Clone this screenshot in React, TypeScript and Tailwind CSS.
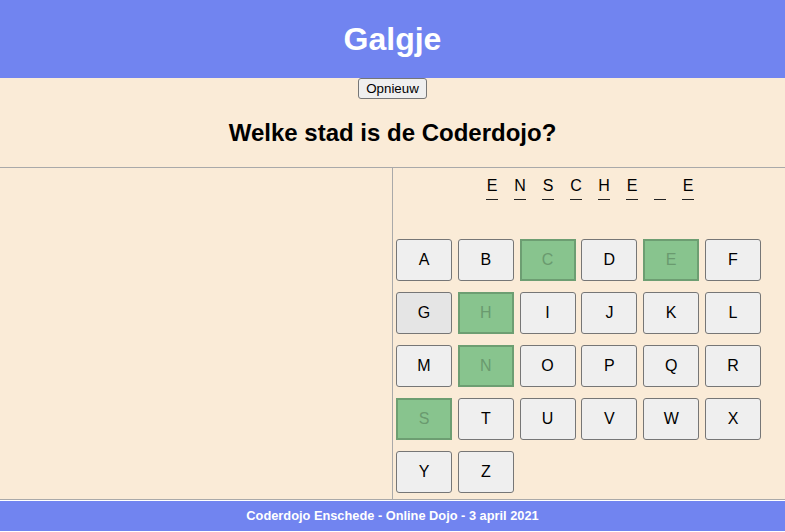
import React from 'react';

const ALPHABET = 'ABCDEFGHIJKLMNOPQRSTUVWXYZ'.split('');
const GUESSED = ['C', 'E', 'H', 'N', 'S'];
const WORD = ['E', 'N', 'S', 'C', 'H', 'E', '', 'E'];

const LetterButton: React.FC<{ letter: string }> = ({ letter }) => {
    const used = GUESSED.includes(letter);
    if (used) {
        return (
            <button
                disabled
                className="h-[42px] w-[56px] border-2 border-[#6d9e72] bg-[#88c48e] text-[16px] text-[#6a9a6f]"
            >
                {letter}
            </button>
        );
    }
    return (
        <button
            className={`h-[42px] w-[56px] rounded-[3px] border border-[#767676] text-[16px] text-black ${letter === 'G' ? 'bg-[#e5e5e5]' : 'bg-[#efefef]'}`}
        >
            {letter}
        </button>
    );
};

export default function App() {
    return (
        <div className="min-h-[532px] bg-white font-['Liberation_Sans',Arial,sans-serif]">
            <div className="bg-[#faebd7]">
                <header className="flex h-[78px] items-center justify-center bg-[#7184f0]">
                    <h1 className="text-[32px] font-bold text-white">Galgje</h1>
                </header>
                <div className="flex justify-center">
                    <button className="h-[21px] rounded-[3px] border border-[#767676] bg-[#efefef] px-[7px] text-[13.33px] leading-none text-black">
                        Opnieuw
                    </button>
                </div>
                <h2 className="my-[20px] text-center text-[24px] font-bold leading-[28px] text-black">
                    Welke stad is de Coderdojo?
                </h2>
                <div className="grid grid-cols-[393px_1fr] border-y border-[#a9a9a9]">
                    <div className="border-r border-[#a9a9a9]"></div>
                    <div className="pb-[6px] pt-[7px]">
                        <div className="flex justify-center pl-[2px]">
                            {WORD.map((l, i) => (
                                <span
                                    key={i}
                                    className="mx-[8px] inline-block h-[25px] w-[12px] border-b border-[#222] text-center text-[16px] leading-[22px] text-black"
                                >
                                    {l}
                                </span>
                            ))}
                        </div>
                        <div className="mt-[39px] flex w-[372px] flex-wrap gap-x-[5.8px] gap-y-[11px] pl-[3px]">
                            {ALPHABET.map((l) => (
                                <LetterButton key={l} letter={l} />
                            ))}
                        </div>
                    </div>
                </div>
            </div>
            <footer className="mt-[1px] flex h-[30px] items-center justify-center bg-[#7184f0] text-[12.8px] font-bold text-white">
                Coderdojo Enschede - Online Dojo - 3 april 2021
            </footer>
        </div>
    );
}
